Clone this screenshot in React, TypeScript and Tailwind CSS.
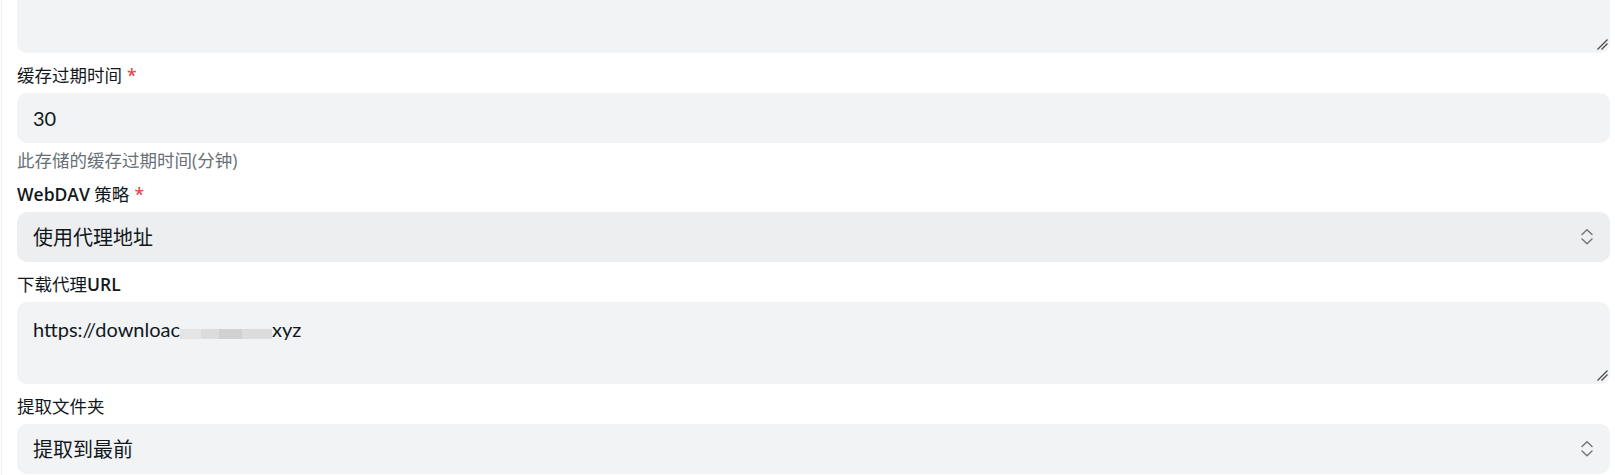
import React from "react";

const Grip = () => (
  <svg
    className="absolute right-[2px] bottom-[3px]"
    width="11"
    height="11"
    viewBox="0 0 11 11"
    fill="none"
  >
    <line x1="0.5" y1="10.5" x2="10.5" y2="0.5" stroke="#4a4a4a" strokeWidth="1.2" />
    <line x1="4.5" y1="10.5" x2="10.5" y2="4.5" stroke="#4a4a4a" strokeWidth="1.2" />
  </svg>
);

const Chevrons = () => (
  <svg width="12" height="16" viewBox="0 0 12 16" fill="none">
    <polyline points="1,5.5 6,0.8 11,5.5" stroke="#6f767b" strokeWidth="1.4" strokeLinecap="round" strokeLinejoin="round" />
    <polyline points="1,10 6,14.8 11,10" stroke="#6f767b" strokeWidth="1.4" strokeLinecap="round" strokeLinejoin="round" />
  </svg>
);

const Req = () => <span className="ml-[5px] text-[#e5484d] font-semibold">*</span>;

const Label = ({ children }: { children: React.ReactNode }) => (
  <div className="mt-[10px] mb-[6px] h-[24px] shrink-0 leading-[24px] text-[17.5px] text-[#11181c]">{children}</div>
);

const valueFont = "font-['Lato','Noto_Sans_CJK_SC',sans-serif] text-[20px] leading-[26px] text-[#11181c]";

const Select = ({ text, dark }: { text: string; dark?: boolean }) => (
  <div
    className={
      "flex h-[50px] shrink-0 items-center justify-between rounded-[10px] pl-[16px] pr-[17px] " +
      valueFont +
      " " +
      (dark ? "bg-[#eceef0]" : "bg-[#f1f3f5]")
    }
  >
    <span>{text}</span>
    <Chevrons />
  </div>
);

export default function App() {
  return (
    <div className="h-[475px] w-[1615px] overflow-hidden bg-white pl-[1px] font-['Open_Sans','Noto_Sans_CJK_SC',sans-serif]">
      <div className="flex h-full flex-col border-l border-[#f0f0f0] pl-[15px] pr-[5px]">
        <div className="relative -mt-[29px] h-[82px] shrink-0 rounded-[10px] bg-[#f1f3f5]">
          <Grip />
        </div>

        <Label>
          缓存过期时间
          <Req />
        </Label>
        <div className={"flex h-[50px] shrink-0 items-center rounded-[10px] bg-[#f1f3f5] px-[16px] " + valueFont}>
          30
        </div>
        <div className="mt-[5px] h-[24px] shrink-0 leading-[24px] text-[17.5px] text-[#687076]">
          此存储的缓存过期时间(分钟)
        </div>

        <Label>
          <span className="font-semibold">WebDAV</span> 策略
          <Req />
        </Label>
        <Select text="使用代理地址" dark />

        <Label>
          下载代理<span className="font-semibold">URL</span>
        </Label>
        <div className={"relative h-[82px] shrink-0 rounded-[10px] bg-[#f1f3f5] px-[16px] pt-[14px] " + valueFont}>
          <span>https://downloac</span>
          <span className="inline-block h-[10px] w-[21px] bg-[#e4e4e4] align-[-2px]" />
          <span className="inline-block h-[10px] w-[18px] bg-[#dcdcdc] align-[-2px]" />
          <span className="inline-block h-[10px] w-[23px] bg-[#d1d1d1] align-[-2px]" />
          <span className="inline-block h-[10px] w-[30px] bg-[#dcdcdc] align-[-2px]" />
          <span>xyz</span>
          <Grip />
        </div>

        <Label>提取文件夹</Label>
        <Select text="提取到最前" />
      </div>
    </div>
  );
}
